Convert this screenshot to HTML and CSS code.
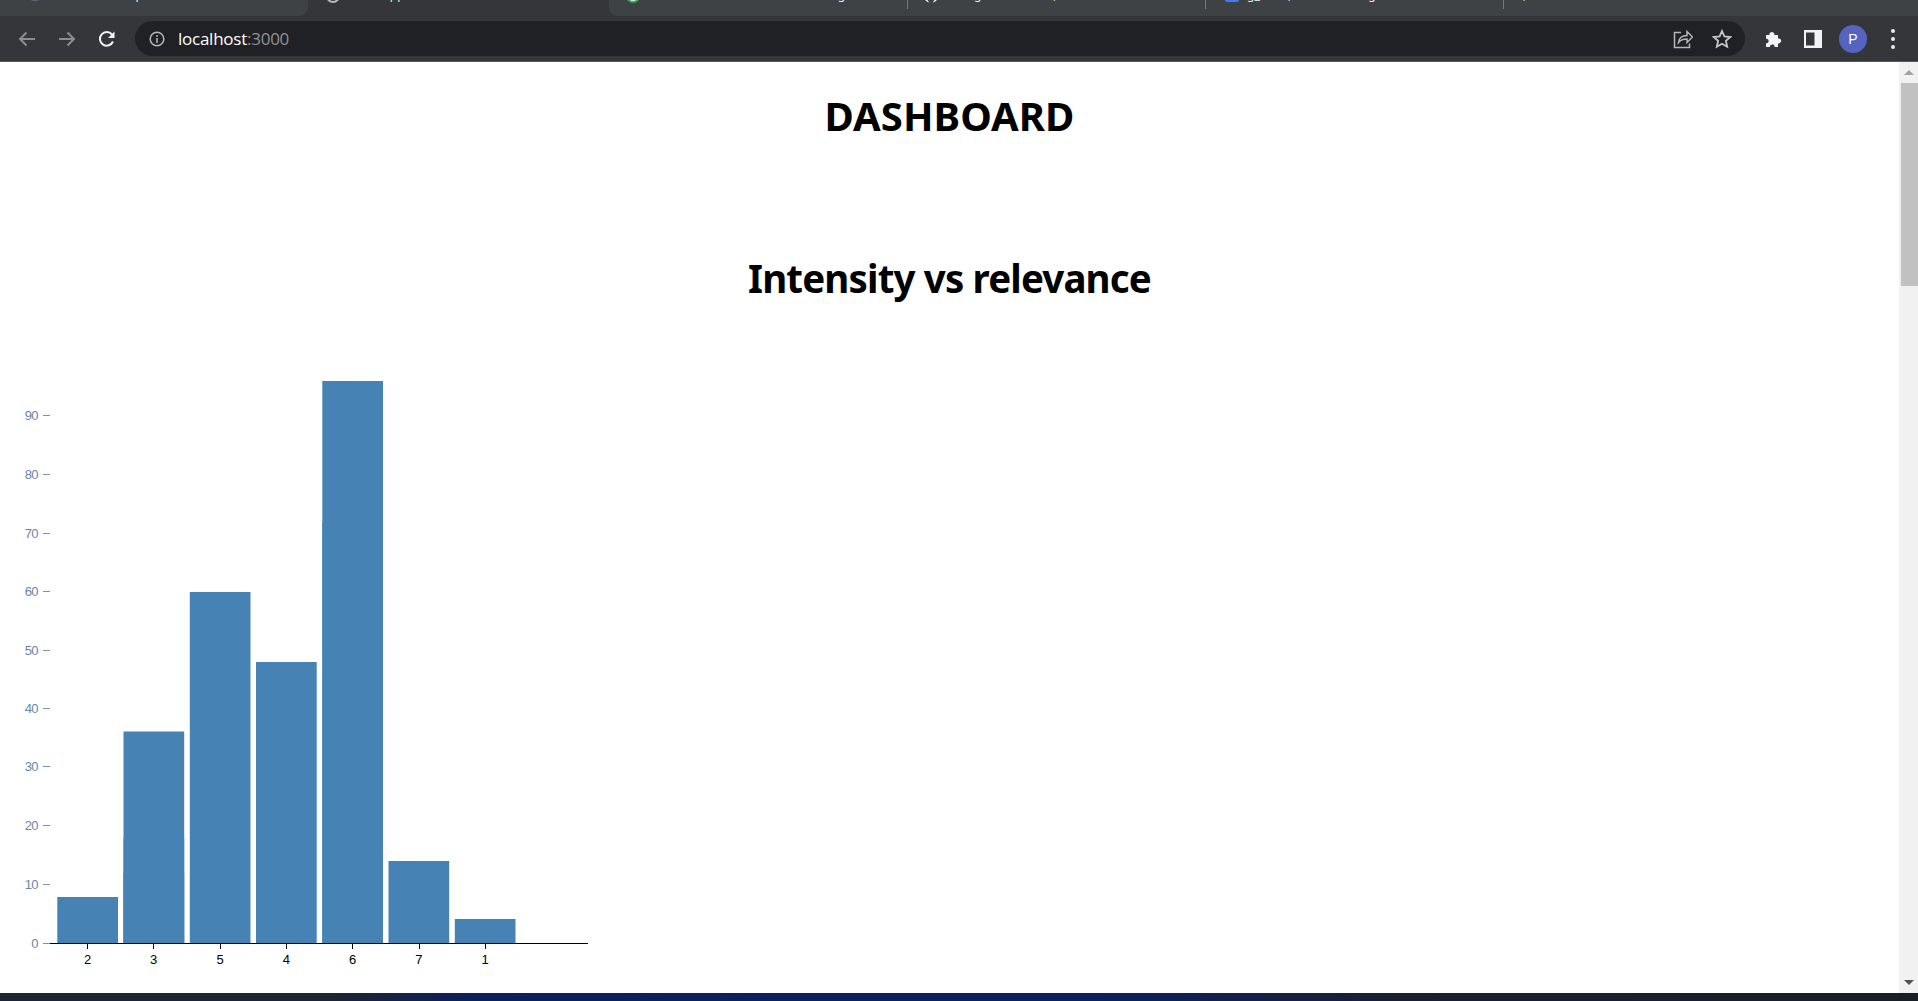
FILE: index.html
```html
<!DOCTYPE html>
<html lang="en">
<head>
    <meta charset="UTF-8">
    <title>Dashboard</title>
    <link rel="stylesheet" href="styles.css">
</head>
<body>

    <div class="browser">
        <div class="tabs">
            <div class="tab tab-first">
                <span class="tab-icon icon-faint"></span>
                <span class="tab-title">Dashboard Report</span>
            </div>
            <div class="tab tab-active">
                <span class="tab-icon icon-grey"></span>
                <span class="tab-title">React App</span>
            </div>
            <div class="tab tab-after">
                <span class="tab-icon icon-green"></span>
                <span class="tab-title">Create a bar chart with React using</span>
            </div>
            <div class="tab tab-line">
                <svg class="tab-icon icon-code" width="14" height="14" viewBox="0 0 14 14"><path d="M0 8l4 6M14 8l-4 6"/></svg>
                <span class="tab-title">Using d3 bar chart, React</span>
            </div>
            <div class="tab tab-line">
                <span class="tab-icon icon-blue"></span>
                <span class="tab-title">g_ data, React charting</span>
            </div>
            <div class="tab tab-line tab-last">
                <span class="tab-title">,</span>
            </div>
        </div>

        <div class="toolbar">
            <div class="nav">
                <button class="tool-btn">
                    <svg width="20" height="20" viewBox="0 0 20 20"><path d="M18 10H3M9.500 3.500 3 10l6.500 6.500" class="line dim"/></svg>
                </button>
                <button class="tool-btn">
                    <svg width="20" height="20" viewBox="0 0 20 20"><path d="M2 10h15M10.500 3.500 17 10l-6.500 6.500" class="line dim"/></svg>
                </button>
                <button class="tool-btn">
                    <svg width="20" height="20" viewBox="0 0 20 20"><path d="M16 12.500A6.800 6.800 0 1 1 15 5.500" class="line bright"/><path d="M17.500 2.500v6.500H11z" class="solid"/></svg>
                </button>
            </div>

            <div class="omnibox">
                <svg class="info" width="16" height="16" viewBox="0 0 16 16">
                    <circle cx="8" cy="8" r="6.800" class="thin"/>
                    <path d="M8 7v5M8 4v1.800" class="thin"/>
                </svg>
                <span class="url">localhost<span class="port">:3000</span></span>
                <button class="box-btn">
                    <svg width="20" height="20" viewBox="0 0 20 20"><path d="M8 3.500H1.500v15h15v-4M5.500 13.500c.5-4 3.500-7 8.500-7V2.500l5.500 5.500-5.500 5.500V10c-3.500 0-6.500 1-8.500 3.500z" class="thin"/></svg>
                </button>
                <button class="box-btn">
                    <svg width="20" height="20" viewBox="0 0 20 20"><path d="M10 2l2.400 5.400 5.900.6-4.400 3.900 1.300 5.800L10 14.700l-5.200 3 1.300-5.800L1.700 8l5.900-.6z" class="star"/></svg>
                </button>
            </div>

            <div class="actions">
                <button class="tool-btn">
                    <svg width="20" height="20" viewBox="0 0 20 20"><path d="M3 6h3.500c-.8-3.500 5-4.500 5 0H15v3.500c4-.8 4.500 5 0 5V18h-3.500c.8-3.500-5-3.500-4.500 0H3v-3.800c3.500.8 3.500-5 0-4.500z" class="solid"/></svg>
                </button>
                <button class="tool-btn">
                    <svg width="20" height="20" viewBox="0 0 20 20"><path d="M1 1h18v18H1zM3 3.500v13h8.500v-13z" class="solid" fill-rule="evenodd"/></svg>
                </button>
                <button class="tool-btn"><span class="avatar">P</span></button>
                <button class="tool-btn">
                    <span class="dots"><i></i><i></i><i></i></span>
                </button>
            </div>
        </div>
    </div>

    <div class="viewport">
        <main class="page">
            <h1 class="title">DASHBOARD</h1>
            <h1 class="title title-chart">Intensity vs relevance</h1>

            <svg class="chart" width="600" height="620" viewBox="0 373 600 620">
                <g class="bars">
                    <rect x="57.300" y="897" width="60.700" height="46"/>
                    <rect x="123.500" y="731.500" width="60.700" height="211.500"/>
                    <rect x="123.500" y="838" width="60.700" height="105"/>
                    <rect x="123.500" y="873" width="60.700" height="70"/>
                    <rect x="189.800" y="592" width="60.700" height="351"/>
                    <rect x="256" y="662" width="60.700" height="281"/>
                    <rect x="322.300" y="381" width="60.700" height="562"/>
                    <rect x="322.300" y="522" width="60.700" height="421"/>
                    <rect x="388.500" y="861" width="60.700" height="82"/>
                    <rect x="454.800" y="919" width="60.700" height="24"/>
                </g>

                <g class="axis-y">
                    <path d="M43 415.500h7M43 474.500h7M43 533.500h7M43 591.500h7M43 650.500h7M43 708.500h7M43 766.500h7M43 825.500h7M43 884.500h7M43 943.500h7"/>
                    <text x="38" y="420">90</text>
                    <text x="38" y="479">80</text>
                    <text x="38" y="538">70</text>
                    <text x="38" y="596">60</text>
                    <text x="38" y="655">50</text>
                    <text x="38" y="713">40</text>
                    <text x="38" y="771">30</text>
                    <text x="38" y="830">20</text>
                    <text x="38" y="889">10</text>
                    <text x="38" y="948">0</text>
                </g>

                <g class="axis-x">
                    <path d="M50 943.500h538M87.500 943v6M153.500 943v6M220.500 943v6M286.500 943v6M352.500 943v6M419.500 943v6M485.500 943v6"/>
                    <text x="87.500" y="964">2</text>
                    <text x="153.700" y="964">3</text>
                    <text x="220" y="964">5</text>
                    <text x="286.300" y="964">4</text>
                    <text x="352.500" y="964">6</text>
                    <text x="418.800" y="964">7</text>
                    <text x="485" y="964">1</text>
                </g>
            </svg>
        </main>

        <div class="scrollbar">
            <div class="arrow arrow-up"></div>
            <div class="thumb"></div>
            <div class="track"></div>
            <div class="arrow arrow-down"></div>
        </div>
    </div>

    <div class="taskbar"></div>

</body>
</html>
```

FILE: styles.css
```css
* {
    box-sizing: border-box;
}

html, body {
    height: 100%;
}

body {
    margin: 0;
    display: flex;
    flex-direction: column;
    overflow: hidden;
    background-color: #fff;
    font-family: "Noto Sans", sans-serif;
}

/* browser top */
.browser {
    flex: none;
    height: 62px;
    background-color: #35363a;
    border-bottom: 1px solid #55575a;
}

.tabs {
    display: flex;
    height: 16px;
    overflow: hidden;
}

.tab {
    display: flex;
    flex: none;
    gap: 8px;
    width: 298px;
    padding-left: 17px;
    background-color: #3e4245;
    color: #e8eaed;
    font-size: 12px;
    white-space: nowrap;
}

.tab-first {
    width: 308px;
    padding-left: 26px;
    border-bottom-right-radius: 9px;
}

.tab-active {
    width: 301px;
    padding-left: 18px;
    background-color: transparent;
}

.tab-after {
    width: 298px;
    padding-left: 17px;
    border-bottom-left-radius: 9px;
}

.tab-line {
    position: relative;
    padding-left: 20px;
}

.tab-line::before {
    content: "";
    position: absolute;
    left: 0;
    top: 0;
    height: 9px;
    border-left: 1px solid #75787c;
}

.tab-last {
    flex: 1;
}

.tab-icon {
    flex: none;
    width: 14px;
    height: 14px;
    margin-top: -11px;
    border-radius: 50%;
}

.icon-faint {
    width: 18px;
    margin-right: 4px;
    background-color: #5c6b78;
    margin-top: -13px;
}

.icon-grey {
    border: 2px solid #b6b8bb;
}

.icon-green {
    border: 2px solid #34a853;
    background-color: #fff;
}

.icon-code {
    margin-left: -3px;
    margin-right: 3px;
    fill: none;
    stroke: #e8eaed;
    stroke-width: 2.500;
}

.icon-blue {
    border-radius: 2px;
    background-color: #3f7cf0;
    margin-top: -12px;
}

.tab-title {
    line-height: 16px;
    margin-top: -13px;
}

.toolbar {
    display: flex;
    align-items: center;
    height: 45px;
    padding: 0 5px 0 7px;
}

.nav {
    display: flex;
    flex: none;
    margin-right: 8px;
}

.tool-btn,
.box-btn {
    display: flex;
    align-items: center;
    justify-content: center;
    width: 40px;
    height: 35px;
    padding: 0;
    border: none;
    background: none;
}

.box-btn {
    width: 39px;
}

.omnibox {
    display: flex;
    flex: 1;
    align-items: center;
    height: 35px;
    padding: 0 4px 0 14px;
    border-radius: 18px;
    background-color: #202124;
}

.info {
    flex: none;
    margin-right: 13px;
}

.url {
    flex: 1;
    color: #fff;
    font-size: 17px;
    font-family: "Open Sans", sans-serif;
    letter-spacing: -0.25px;
}

.port {
    color: #8f9296;
}

.actions {
    display: flex;
    flex: none;
    margin-left: 8px;
}

.avatar {
    display: block;
    width: 28px;
    height: 28px;
    border-radius: 50%;
    background-color: #5563c1;
    color: #fff;
    font-size: 14px;
    line-height: 28px;
    text-align: center;
}

.dots {
    display: flex;
    flex-direction: column;
    gap: 4px;
}

.dots i {
    display: block;
    width: 4px;
    height: 4px;
    border-radius: 50%;
    background-color: #e8eaed;
}

.line {
    fill: none;
    stroke-width: 2;
}

.dim {
    stroke: #8b8d90;
}

.bright {
    stroke: #f1f3f4;
}

.solid {
    fill: #f1f3f4;
}

.thin {
    fill: none;
    stroke: #b5b7ba;
    stroke-width: 1.500;
}

.star {
    fill: none;
    stroke: #c4c6c9;
    stroke-width: 1.800;
}

/* page */
.viewport {
    display: flex;
    flex: 1;
    min-height: 0;
}

.page {
    flex: 1;
    min-width: 0;
    overflow: hidden;
}

.title {
    margin: 0;
    padding-top: 25px;
    color: #000;
    font-size: 40px;
    font-weight: 700;
    line-height: 58px;
    text-align: center;
    letter-spacing: 0.05px;
}

.title-chart {
    padding-top: 104px;
    font-size: 38.500px;
    letter-spacing: -0.85px;
}

.chart {
    display: block;
    margin-top: 66px;
}

.bars rect {
    fill: steelblue;
}

.axis-y path {
    fill: none;
    stroke: #7393b8;
}

.axis-y text {
    fill: #6885ad;
    font-family: "Liberation Sans", sans-serif;
    font-size: 13px;
    letter-spacing: -0.6px;
    text-anchor: end;
}

.axis-x path {
    fill: none;
    stroke: #000;
}

.axis-x text {
    fill: #000;
    font-family: "Liberation Sans", sans-serif;
    font-size: 13px;
    text-anchor: middle;
}

/* scrollbar */
.scrollbar {
    display: flex;
    flex: none;
    flex-direction: column;
    width: 19px;
    background-color: #f1f1f1;
}

.thumb {
    flex: none;
    height: 203px;
    margin-left: 2px;
    background-color: #c1c1c1;
}

.track {
    flex: 1;
}

.arrow {
    flex: none;
    display: flex;
    justify-content: center;
    align-items: center;
    height: 21px;
}

.arrow::before {
    content: "";
    border-left: 5px solid transparent;
    border-right: 5px solid transparent;
}

.arrow-up::before {
    border-bottom: 5px solid #a3a3a3;
}

.arrow-down::before {
    border-top: 5px solid #505050;
}

.taskbar {
    flex: none;
    height: 8px;
    background: linear-gradient(90deg, #1c2530 0, #1c2530 330px, #0e1f5e 480px, #0f2060 1100px, #1a2030 1400px, #191f26 1918px);
}
```
